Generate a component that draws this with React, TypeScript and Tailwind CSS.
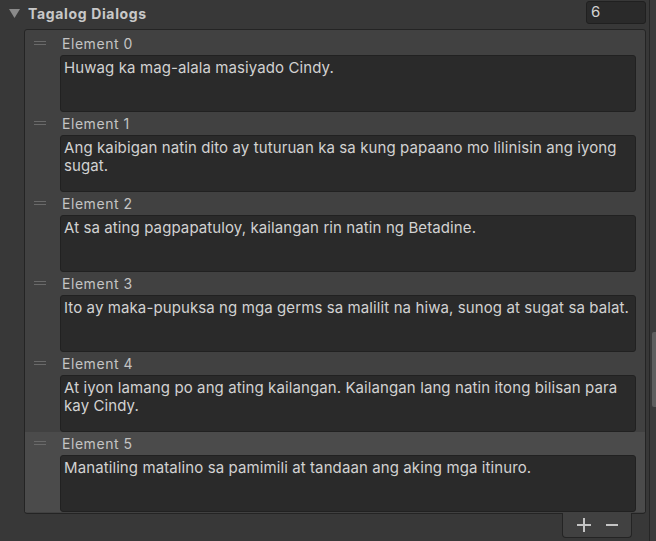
import React from "react";

const dialogs = [
  "Huwag ka mag-alala masiyado Cindy.",
  "Ang kaibigan natin dito ay tuturuan ka sa kung papaano mo lilinisin ang iyong sugat.",
  "At sa ating pagpapatuloy, kailangan rin natin ng Betadine.",
  "Ito ay maka-pupuksa ng mga germs sa malilit na hiwa, sunog at sugat sa balat.",
  "At iyon lamang po ang ating kailangan. Kailangan lang natin itong bilisan para kay Cindy.",
  "Manatiling matalino sa pamimili at tandaan ang aking mga itinuro.",
];

const App = () => {
  return (
    <div
      className="flex h-[541px] w-[656px] overflow-hidden bg-[#383838] text-[14px] text-[#c4c4c4]"
      style={{ fontFamily: "Inter, 'Noto Sans', sans-serif" }}
    >
      <div className="flex w-[649px] flex-col">
        {/* Header */}
        <div className="flex h-[29px] items-center">
          <svg className="ml-[9px] mt-[-2px]" width="11" height="9" viewBox="0 0 11 9">
            <polygon points="0,0 11,0 5.5,9" fill="#8a8a8a" />
          </svg>
          <span className="ml-[8px] mt-[-3px] font-bold tracking-[0.65px] text-[#c8c8c8]">Tagalog Dialogs</span>
          <div className="flex-1" />
          <div className="mr-[3px] mt-[-4px] flex h-[23px] w-[60px] items-center rounded-[3px] border border-[#202020] bg-[#2a2a2a] pl-[4px] text-[15px] text-[#d2d2d2]">
            6
          </div>
        </div>

        {/* List */}
        <div className="ml-[24px] mr-[3px] rounded-[3px] border border-[#242424] bg-[#414141] pb-[1px] pt-[2px]">
          {dialogs.map((text, i) => (
            <div key={i} className={`h-[80px] ${i === 5 ? "bg-[#4b4b4b]" : ""}`}>
              <div className="flex h-[23px] items-center">
                <div className="ml-[9px] mt-[-2px] flex w-[12px] flex-col gap-[2px]">
                  <div className="h-px bg-[#6a6a6a]" />
                  <div className="h-px bg-[#6a6a6a]" />
                </div>
                <span className="ml-[16px] mt-[-1px] tracking-[0.55px]">Element {i}</span>
              </div>
              <div className="ml-[35px] mr-[9px] h-[57px] rounded-[3px] border border-[#212121] bg-[#2a2a2a] pl-[3px] pr-[1px] pt-[3px] text-[15px] leading-[18px] tracking-[0.1px] text-[#d2d2d2]">
                {text}
              </div>
            </div>
          ))}
        </div>

        {/* Footer */}
        <div className="flex justify-end">
          <div className="mr-[17px] mt-[-1px] flex h-[25px] w-[70px] items-center justify-around rounded-b-[4px] border border-t-0 border-[#242424] bg-[#414141] px-[6px] text-[#c4c4c4]">
            <svg width="14" height="14" viewBox="0 0 14 14">
              <rect x="6" y="0" width="2" height="14" fill="#c4c4c4" />
              <rect x="0" y="6" width="14" height="2" fill="#c4c4c4" />
            </svg>
            <svg width="12" height="14" viewBox="0 0 12 14">
              <rect x="0" y="6" width="12" height="2" fill="#c4c4c4" />
            </svg>
          </div>
        </div>
      </div>

      {/* Scrollbar */}
      <div className="w-px bg-[#262626]" />
      <div className="flex w-[6px] flex-col bg-[#3b3b3b] pl-[2px]">
        <div className="mt-[332px] h-[75px] w-[4px] rounded-l-[2px] bg-[#5e5e5e]" />
      </div>
    </div>
  );
};

export default App;
